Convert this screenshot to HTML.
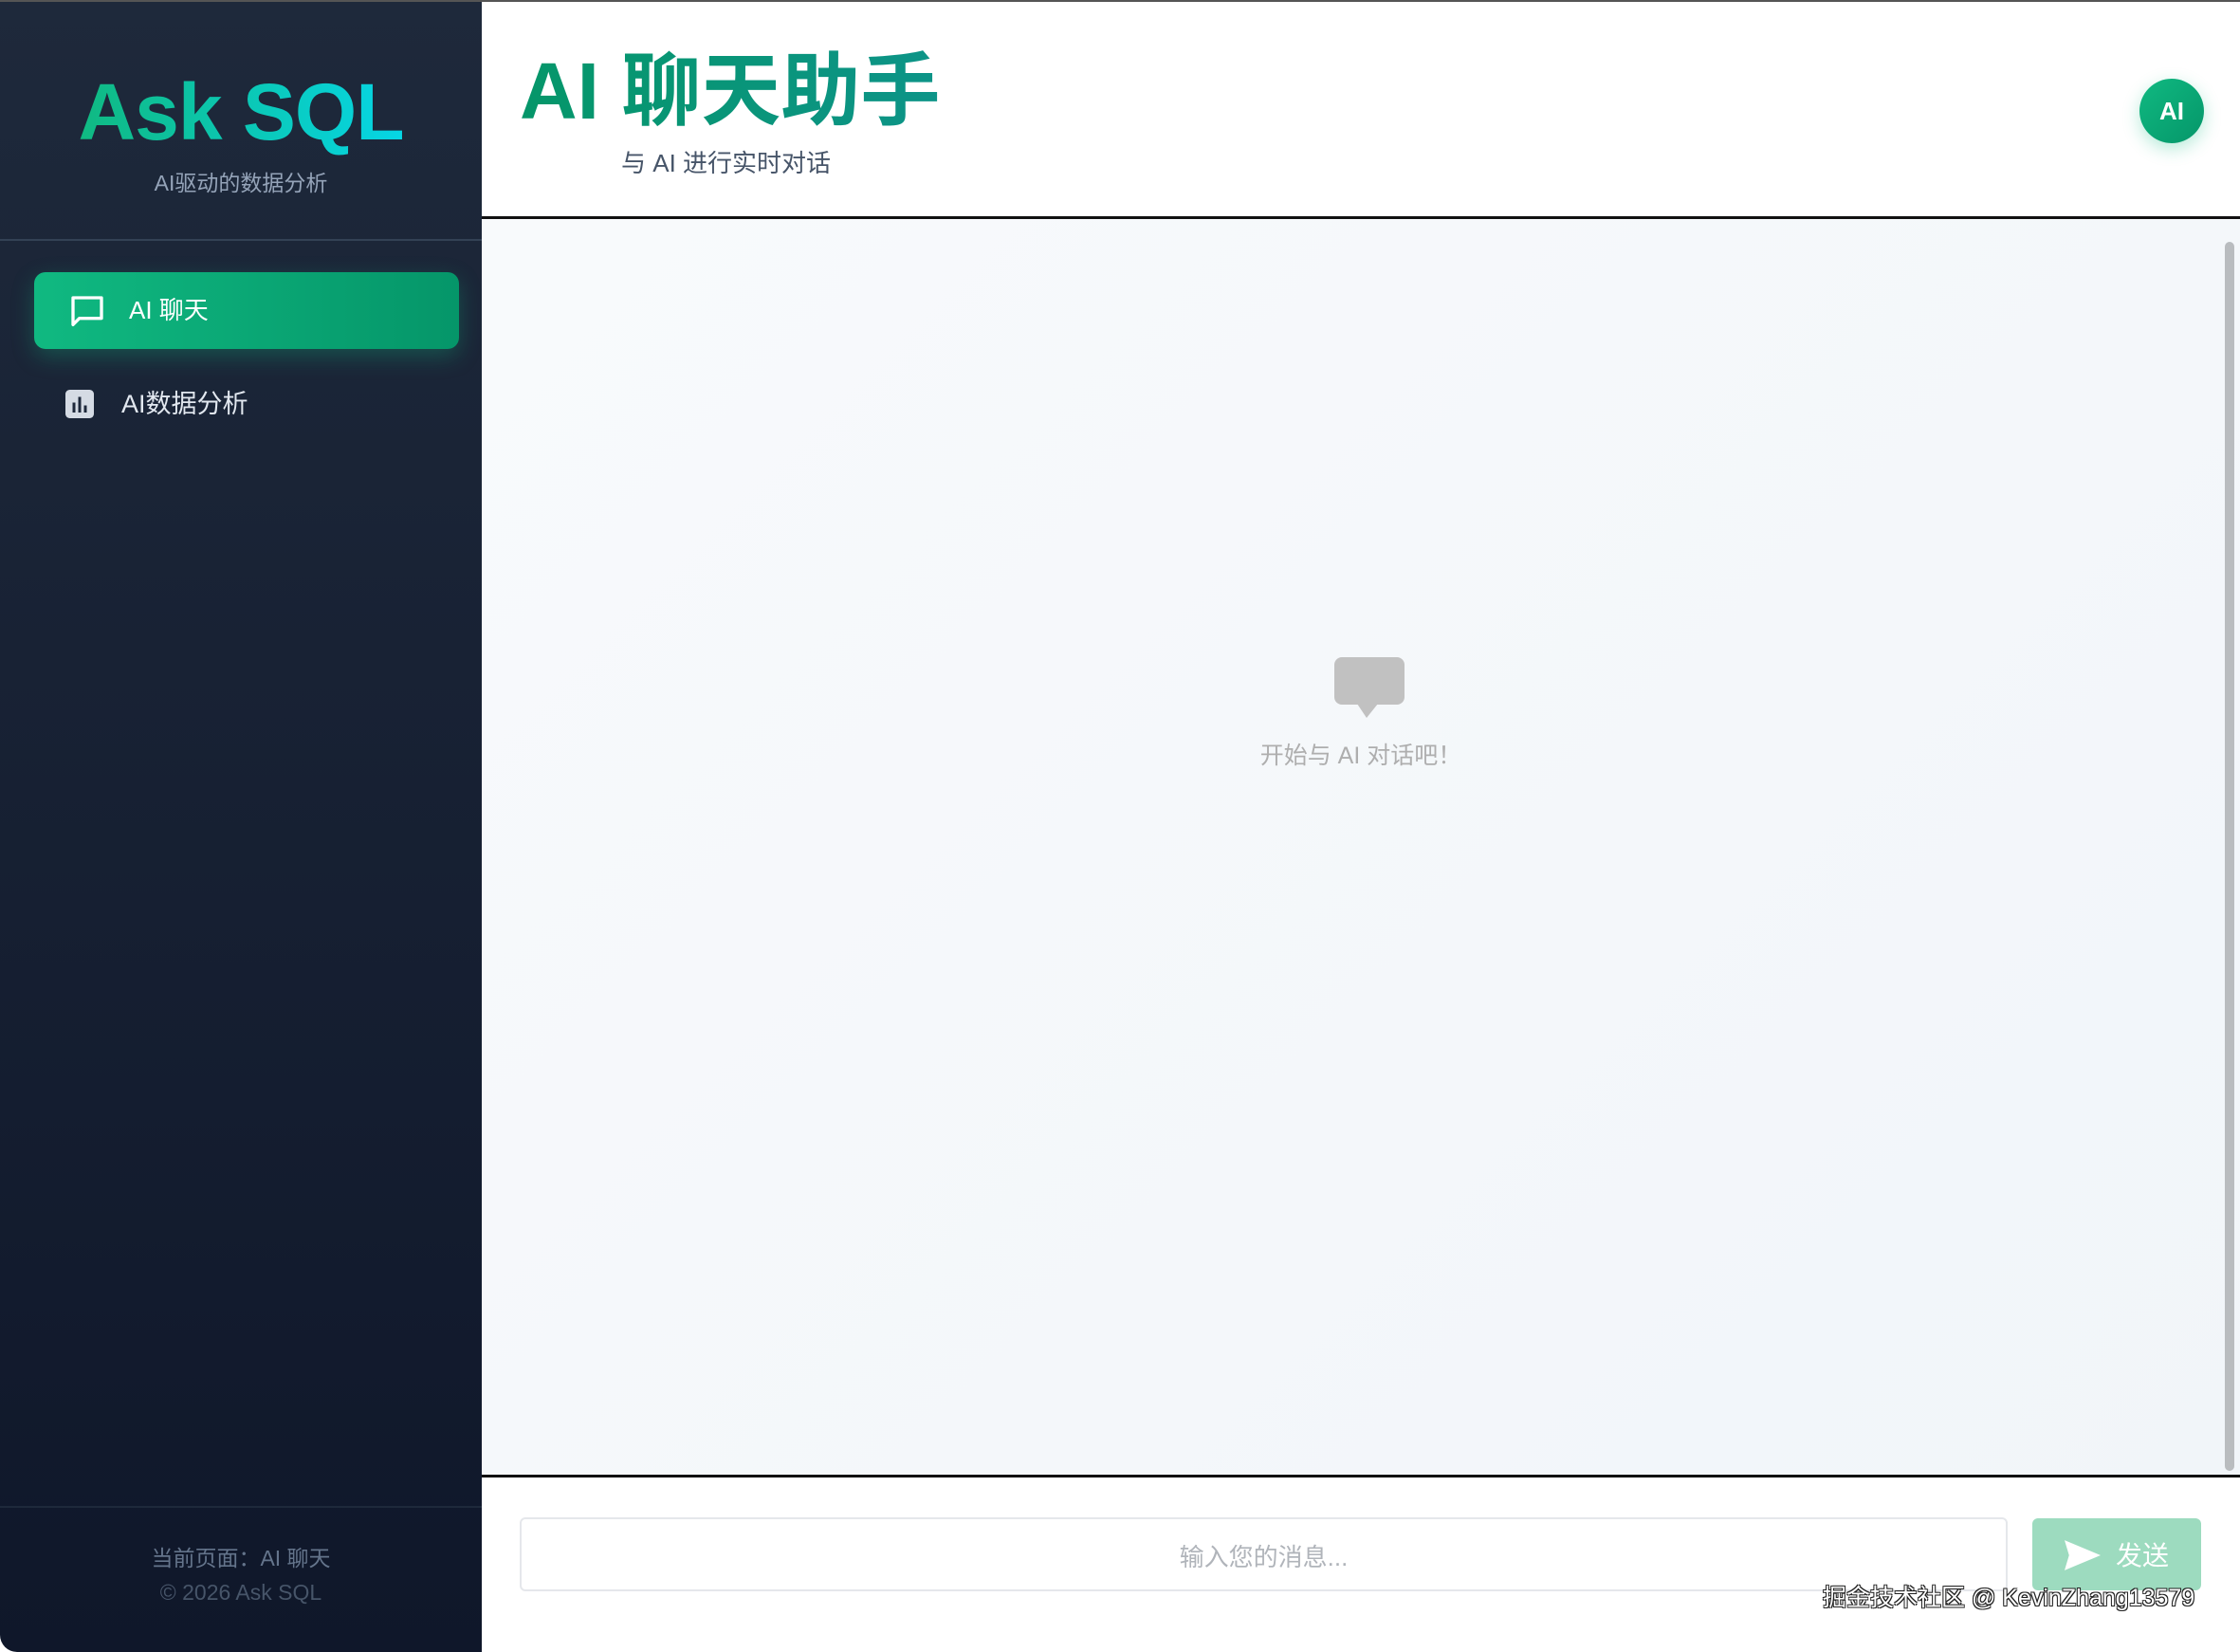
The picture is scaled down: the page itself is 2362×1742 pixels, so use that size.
<!DOCTYPE html>
<html><head><meta charset="utf-8">
<style>
*{margin:0;padding:0;box-sizing:border-box}
html,body{width:2362px;height:1742px;overflow:hidden;background:#fff;font-family:"Liberation Sans","Noto Sans CJK SC",sans-serif}
.side{position:absolute;left:0;top:0;width:508px;height:1742px;background:linear-gradient(180deg,#1e293b 0%,#0f172a 100%);border-bottom-left-radius:18px;overflow:hidden}
.logo{position:absolute;left:0;width:508px;top:66px;text-align:center;font-size:84px;font-weight:bold;letter-spacing:-1px;line-height:104px}
.logo span{background:linear-gradient(90deg,#10b981,#06d6e6);-webkit-background-clip:text;background-clip:text;color:transparent}
.lsub{position:absolute;left:0;width:508px;top:174px;text-align:center;color:#94a3b8;font-size:23px}
.div1{position:absolute;left:0;top:252px;width:508px;height:2px;background:#334155}
.nav1{position:absolute;left:36px;top:287px;width:448px;height:81px;border-radius:12px;background:linear-gradient(90deg,#10b981,#059669);box-shadow:0 8px 24px rgba(16,185,129,.3)}
.nav1 .t{position:absolute;left:100px;top:22px;color:#fff;font-size:26px;line-height:36px}
.nav2 .t{position:absolute;left:128px;top:408px;color:#e2e8f0;font-size:27px;line-height:36px}
.div2{position:absolute;left:0;top:1588px;width:508px;height:2px;background:#1e293b}
.f1{position:absolute;left:0;width:508px;top:1624px;text-align:center;color:#64748b;font-size:23px}
.f2{position:absolute;left:0;width:508px;top:1666px;text-align:center;color:#475569;font-size:23px}
.main{position:absolute;left:508px;top:0;right:0;height:1742px}
.topline{position:absolute;left:0;top:0;width:2362px;height:2px;background:#555}
.head{position:absolute;left:0;top:2px;right:0;height:227px;background:#fff}
.title{position:absolute;left:40px;top:44px;font-size:84px;font-weight:bold;line-height:100px;white-space:nowrap}
.title span{background:linear-gradient(90deg,#059669,#0d9488);-webkit-background-clip:text;background-clip:text;color:transparent}
.hsub{position:absolute;left:147px;top:150px;color:#475569;font-size:26px}
.av{position:absolute;left:1748px;top:81px;width:68px;height:68px;border-radius:50%;background:linear-gradient(135deg,#10b981,#059669);box-shadow:0 6px 18px rgba(16,185,129,.3);color:#fff;font-weight:bold;font-size:26px;text-align:center;line-height:68px}
.hl{position:absolute;left:0;top:228px;right:0;height:3px;background:#111}
.chat{position:absolute;left:0;top:231px;right:0;height:1324px;background:linear-gradient(135deg,#f8fafc,#f1f5f9)}
.sb{position:absolute;left:1838px;top:24px;width:10px;height:1296px;border-radius:5px;background:#b9bcbf}
.bl{position:absolute;left:0;top:1555px;right:0;height:3px;background:#111}
.in{position:absolute;left:40px;top:1600px;width:1569px;height:78px;border:2px solid #e5e7eb;border-radius:6px;background:#fff;text-align:center;line-height:80px;color:#b0b4ba;font-size:26px}
.btn{position:absolute;left:1635px;top:1601px;width:178px;height:76px;border-radius:6px;background:#9ddbbf;color:#fff;font-size:28px;line-height:80px}
.wm{position:absolute;left:1414px;top:1665px;color:#fff;font-size:25px;white-space:nowrap;text-shadow:-1px -1px 0 #222,1px -1px 0 #222,-1px 1px 0 #222,1px 1px 0 #222}
</style></head><body>
<div class="side">
<div class="logo"><span>Ask SQL</span></div>
<div class="lsub">AI驱动的数据分析</div>
<div class="div1"></div>
<div class="nav1">
<svg style="position:absolute;left:36px;top:22px" width="40" height="40" viewBox="0 0 24 24" fill="none" stroke="#fff" stroke-width="2" stroke-linejoin="round"><path d="M3 3h18v13H7l-4 4z"/></svg>
<div class="t">AI 聊天</div></div>
<div class="nav2">
<svg style="position:absolute;left:69px;top:411px" width="30" height="30" viewBox="0 0 20 20"><rect x="0" y="0" width="20" height="20" rx="3" fill="#d5dbe4"/><rect x="5" y="9" width="2" height="7" fill="#1e293b"/><rect x="9" y="5" width="2" height="11" fill="#1e293b"/><rect x="13" y="11" width="2" height="5" fill="#1e293b"/></svg>
<div class="t">AI数据分析</div></div>
<div class="div2"></div>
<div class="f1">当前页面：AI 聊天</div>
<div class="f2">© 2026 Ask SQL</div>
</div>
<div class="main">
<div class="head">
<div class="title"><span>AI 聊天助手</span></div>
<div class="hsub">与 AI 进行实时对话</div>
<div class="av">AI</div>
</div>
<div class="hl"></div>
<div class="chat">
<svg style="position:absolute;left:899px;top:462px" width="74" height="66" viewBox="0 0 74 66"><rect x="0" y="0" width="74" height="50" rx="8" fill="#c1c1c1"/><path d="M24 49 L34 64 L46 49Z" fill="#c1c1c1"/></svg>
<div style="position:absolute;left:0;width:1854px;top:546px;text-align:center;color:#aeaeae;font-size:25px">开始与 AI 对话吧！</div>
<div class="sb"></div>
</div>
<div class="bl"></div>
<div class="in">输入您的消息...</div>
<div class="btn"><svg style="position:absolute;left:34px;top:23px" width="38" height="32" viewBox="0 0 24 20"><path d="M0 0 L24 10 L0 20 L3 10Z" fill="#fff"/></svg><span style="position:absolute;left:88px">发送</span></div>
<div class="wm">掘金技术社区 @ KevinZhang13579</div>
</div>
<div class="topline"></div>
</body></html>
